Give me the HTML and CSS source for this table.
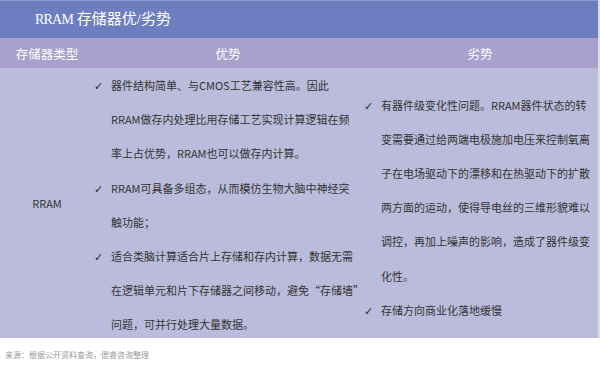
FILE: index.html
```html
<!DOCTYPE html>
<html lang="zh-CN">
<head>
<meta charset="utf-8">
<title>RRAM 存储器优/劣势</title>
<link rel="stylesheet" href="styles.css">
</head>
<body>
<div class="page">
  <div class="table">
    <div class="title"><span class="title-text"><span class="title-latin">RRAM</span> 存储器优/劣势</span></div>
    <div class="row head">
      <div class="cell c1">存储器类型</div>
      <div class="cell c2">优势</div>
      <div class="cell c3">劣势</div>
    </div>
    <div class="row body">
      <div class="cell c1 name">RRAM</div>
      <div class="cell c2 list pros">
        <div class="item"><span class="chk">✓</span><div class="txt">器件结构简单、与CMOS工艺兼容性高。因此<br>RRAM做存内处理比用存储工艺实现计算逻辑在频<br>率上占优势，RRAM也可以做存内计算。</div></div>
        <div class="item"><span class="chk">✓</span><div class="txt">RRAM可具备多组态，从而模仿生物大脑中神经突<br>触功能；</div></div>
        <div class="item"><span class="chk">✓</span><div class="txt">适合类脑计算适合片上存储和存内计算，数据无需<br>在逻辑单元和片下存储器之间移动，避免“存储墙”<br>问题，可并行处理大量数据。</div></div>
      </div>
      <div class="cell c3 list cons">
        <div class="item"><span class="chk">✓</span><div class="txt">有器件级变化性问题。RRAM器件状态的转<br>变需要通过给两端电极施加电压来控制氧离<br>子在电场驱动下的漂移和在热驱动下的扩散<br>两方面的运动，使得导电丝的三维形貌难以<br>调控，再加上噪声的影响，造成了器件级变<br>化性。</div></div>
        <div class="item"><span class="chk">✓</span><div class="txt">存储方向商业化落地缓慢</div></div>
      </div>
    </div>
  </div>
  <div class="source">来源：根据公开资料查询，偲睿咨询整理</div>
</div>
</body>
</html>
```

FILE: styles.css
```css
html, body {
  margin: 0;
  padding: 0;
  background: #ffffff;
}

body {
  width: 600px;
  height: 368px;
  overflow: hidden;
  font-family: "Noto Sans CJK SC", "Noto Sans", sans-serif;
  color: #333333;
}

.page {
  width: 600px;
}

.table {
  width: 598px;
  border-right: 2px solid #dcdcec;
}

.title {
  height: 37px;
  border-top: 1px solid #8f9ad0;
  background: #6c7ec0;
  color: #ffffff;
  display: flex;
  align-items: center;
  padding-left: 35px;
}

.title-text {
  font-family: "Liberation Serif", "Noto Sans CJK SC", serif;
  font-size: 15px;
  line-height: 20px;
  white-space: pre;
  padding-bottom: 1px;
}

.title-latin {
  font-size: 14px;
  letter-spacing: -0.8px;
}

.row {
  display: grid;
  grid-template-columns: 94px 268px 236px;
}

.head {
  height: 30px;
  background: #a9a1cb;
  color: #ffffff;
  font-size: 12.5px;
}

.head .cell {
  display: flex;
  align-items: center;
  justify-content: center;
}

.body {
  height: 270px;
  background: #bbbcdb;
  font-size: 11px;
}

.name {
  display: flex;
  align-items: center;
  justify-content: center;
  font-size: 11px;
  padding-bottom: 4px;
}

.list {
  display: flex;
  flex-direction: column;
  justify-content: center;
  line-height: 34.2px;
  white-space: nowrap;
}

.item {
  display: flex;
  align-items: baseline;
}

.chk {
  width: 17px;
  flex: none;
  font-family: "DejaVu Sans", sans-serif;
  font-size: 11px;
  font-weight: bold;
  color: #2a2a2a;
}

.pros {
  padding-left: 0;
}

.cons {
  padding-left: 2px;
  padding-top: 7px;
}

.source {
  padding: 7px 0 0 5px;
  font-size: 8px;
  line-height: 20px;
  color: #9a9a9a;
}
```
